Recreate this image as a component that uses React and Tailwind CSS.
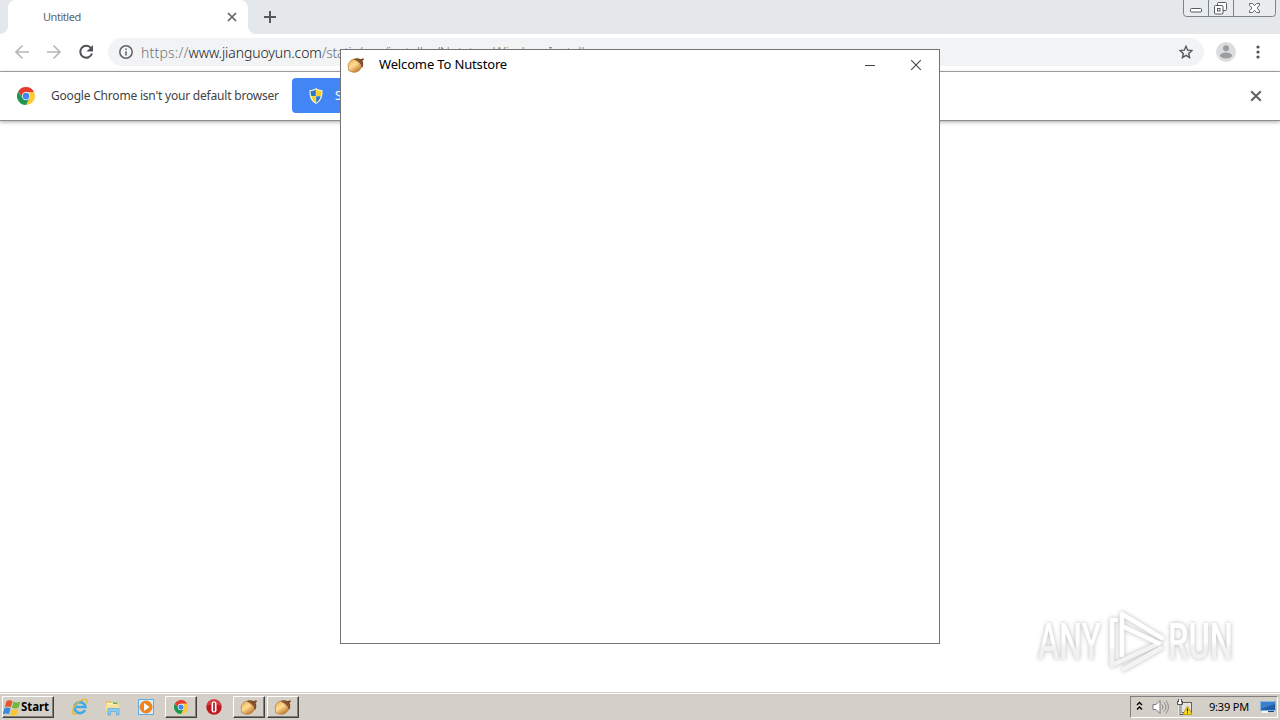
import { useId } from 'react';

const ui = "font-['Noto_Sans','Open_Sans',sans-serif]";

function ChromeLogo({ size }) {
  return (
    <svg width={size} height={size} viewBox="0 0 48 48" className="shrink-0">
      <path fill="#e33b2e" d="M24 13H45.3A24 24 0 0 0 3.2 12L14.5 29.5Z" />
      <path fill="#fcc934" d="M33.5 29.5 24 48A24 24 0 0 0 45.3 13H24Z" />
      <path fill="#1a9850" d="M14.5 29.5 3.2 12A24 24 0 0 0 24 48L33.5 29.5Z" />
      <circle cx="24" cy="24" r="11" fill="#fff" />
      <circle cx="24" cy="24" r="9" fill="#4285f4" />
    </svg>
  );
}

function Acorn({ size }) {
  const id = useId();
  return (
    <svg width={size} height={size} viewBox="0 0 18 18" className="shrink-0">
      <defs>
        <linearGradient id={id} x1="0.1" y1="0" x2="0.8" y2="1">
          <stop offset="0" stopColor="#e9a850" />
          <stop offset="0.45" stopColor="#ffdc91" />
          <stop offset="1" stopColor="#b96b20" />
        </linearGradient>
      </defs>
      <path fill={`url(#${id})`} stroke="#a8682c" strokeWidth="0.6" d="M7.500 3C4 3.500 1 6.500 1.200 10c.2 2 .6 3 .4 4.600 1.500.3 3 1.700 5.400 1.700 4 0 7-2.600 7.600-6Z" />
      <path fill="#7a431c" d="M6.500 3.300C8.500 2 11.500 1.900 13.500 3.200l2.700-.9.900 1.200-1.700 1.300c1.300 2 1.200 5-.5 7.400C14.500 8.500 11.500 4.800 6.500 3.300Z" />
      <path stroke="#b3783f" strokeWidth="0.6" fill="none" d="M9.500 3.200c3 .7 5 3 5.700 5.800" />
    </svg>
  );
}

function Shield() {
  return (
    <svg width="14" height="16" viewBox="0 0 14 16" className="shrink-0">
      <path fill="#f4f1cf" d="M7 0C5 1.500 3 2 .5 2 .2 8 1.500 13 7 16c5.500-3 6.800-8 6.500-14C11 2 9 1.500 7 0Z" />
      <path fill="#2c78cf" d="M6.800 1.500C5 2.700 3.500 3 1.600 3.100c0 1.700.1 3.400.6 4.900h4.600Z" />
      <path fill="#f9cf25" d="M7.200 1.500C9 2.700 10.500 3 12.400 3.100c0 1.700-.1 3.400-.6 4.900H7.200Z" />
      <path fill="#f9cf25" d="M2.300 8.200h4.500v6.500c-2.200-1.400-3.800-3.600-4.500-6.500Z" />
      <path fill="#2c78cf" d="M11.700 8.200H7.200v6.500c2.200-1.400 3.800-3.600 4.500-6.500Z" />
    </svg>
  );
}

function Cross({ size, width = 2, color = '#5f6368' }) {
  return (
    <svg width={size} height={size} viewBox="0 0 10 10" fill="none" stroke={color} strokeWidth={width} className="shrink-0">
      <path d="m1 1 8 8M9 1 1 9" />
    </svg>
  );
}

function CaptionButtons() {
  return (
    <svg width="93" height="17" viewBox="0 0 93 17" fill="none" stroke="#7d838a" className="shrink-0">
      <path fill="#e9ecee" d="M.5 0v13.500q0 3 3 3h86q3 0 3-3V0" />
      <path d="M25.500 0v16.500M50.500 0v16.500" />
      <g stroke="#555a61">
        <rect x="7.500" y="8.500" width="11" height="3.500" rx="1" fill="#fff" />
        <rect x="34.500" y="2.500" width="9" height="8" rx="1" fill="#fff" />
        <rect x="31.500" y="5.500" width="8.500" height="8.500" rx="1" fill="#fff" />
        <rect x="34.500" y="8.500" width="2.500" height="2.500" />
        <path fill="#fff" strokeWidth="0.9" d="M66.500 3.500h3l2 2.200 2-2.200h3v1.800L74 8l2.500 2.800v1.700h-3l-2-2.200-2 2.200h-3v-1.700L69 8l-2.500-2.700Z" />
      </g>
    </svg>
  );
}

function TabStrip() {
  return (
    <div className="flex h-[34px] bg-[#e4e8eb]">
      <div className="w-2 bg-white">
        <div className="h-full rounded-br-lg bg-[#e4e8eb]" />
      </div>
      <div className="flex w-60 items-center rounded-t-lg bg-white pr-[11px] pl-[35px]">
        <span className="flex-1 text-[11px] tracking-[-0.450px] text-[#5f6368]">Untitled</span>
        <Cross size={10} width={1.7} />
      </div>
      <div className="w-2 bg-white">
        <div className="h-full rounded-bl-lg bg-[#e4e8eb]" />
      </div>
      <svg width="28" height="34" fill="none" stroke="#55595e" strokeWidth="2">
        <path d="M14 11v12M8 17h12" />
      </svg>
      <div className="flex-1" />
      <CaptionButtons />
      <div className="w-1" />
    </div>
  );
}

function Toolbar() {
  return (
    <div className="flex h-[38px] items-center border-b border-[#a9abad] bg-white pb-px pl-[15px]">
      <svg width="80" height="16" viewBox="0 0 80 16" fill="none" strokeWidth="1.7">
        <path stroke="#b6b8bb" d="M14 8H1M7.500 1.500 1 8l6.500 6.500M32 8h13M38.500 1.500 45 8l-6.500 6.500" />
        <path stroke="#505459" strokeWidth="2" d="M76 4A6 6 0 1 0 77 9.500" />
        <path fill="#505459" d="M78 1v6.500h-6.500Z" />
      </svg>
      <div className="ml-[13px] flex h-7 w-[1096px] items-center rounded-full bg-[#f1f3f4] pr-[11px] pl-[11px]">
        <svg width="14" height="14" viewBox="0 0 14 14" className="shrink-0" fill="none" stroke="#5f6368">
          <circle cx="7" cy="7" r="6.200" strokeWidth="1.500" />
          <path strokeWidth="1.500" d="M7 6.200v4.300M7 3.500V5" />
        </svg>
        <div className="ml-2 flex-1 text-[14px] font-light whitespace-nowrap text-[#72767b]">
          <span className="tracking-[0.200px]">https://</span>
          <span className="tracking-[-0.100px] text-[#202124]">www.jianguoyun.com</span>
          <span className="tracking-[-0.320px]">/static/exe/installer/NutstoreWindowsInstaller</span>
        </div>
        <svg width="14" height="14" viewBox="0 0 14 14" fill="none" stroke="#55595e" strokeWidth="1.400">
          <path d="m7 1.300 1.700 3.900 4.200.4-3.200 2.800.9 4.200L7 10.400l-3.600 2.200.9-4.200L1.100 5.600l4.200-.4Z" />
        </svg>
      </div>
      <svg width="20" height="20" viewBox="0 0 20 20" className="ml-3">
        <circle cx="10" cy="10" r="10" fill="#dcdddf" />
        <circle cx="10" cy="6.200" r="3" fill="#9b9da0" />
        <ellipse cx="10" cy="13.500" rx="6" ry="3" fill="#9b9da0" />
      </svg>
      <svg width="4" height="16" viewBox="0 0 4 16" className="ml-5" fill="#505459">
        <circle cx="2" cy="3" r="1.600" />
        <circle cx="2" cy="8" r="1.600" />
        <circle cx="2" cy="13" r="1.600" />
      </svg>
    </div>
  );
}

function InfoBar() {
  return (
    <div className="z-10 flex h-[49px] items-center border-b border-[#8d8d8d] bg-white pb-px pl-[17px] shadow-[0_1px_4px_rgba(0,0,0,0.35)]">
      <ChromeLogo size={18} />
      <span className="ml-4 w-[241px] text-[12px] tracking-[-0.200px] whitespace-nowrap text-[#3f4246]">
        Google Chrome isn't your default browser
      </span>
      <button className="flex h-[35px] w-32 items-center gap-3 rounded bg-[#4285f4] pl-[17px] text-xs whitespace-nowrap text-white">
        <Shield />
        Set as default
      </button>
      <div className="flex-1" />
      <Cross size={12} width={1.700} />
      <div className="w-[18px]" />
    </div>
  );
}

function NutstoreWindow() {
  return (
    <div className="absolute top-[49px] left-[340px] z-20 h-[595px] w-[600px] border border-[#747474] bg-white">
      <div className="flex h-[30px] items-center pl-[6px]">
        <Acorn size={18} />
        <span className="ml-[14px] flex-1 text-[13px] tracking-[-0.150px] text-black">Welcome To Nutstore</span>
        <div className="h-px w-[10px] bg-[#444]" />
        <div className="w-[35px]" />
        <Cross size={12} width={0.900} color="#444" />
        <div className="w-[17px]" />
      </div>
    </div>
  );
}

function Watermark() {
  return (
    <svg
      width="220"
      height="74"
      viewBox="0 0 220 74"
      className="absolute top-[605px] left-[1033px] [filter:drop-shadow(0_0_2px_rgba(0,0,0,0.28))]"
    >
      <defs>
        <linearGradient id="letters" x1="0" y1="0" x2="0" y2="1">
          <stop offset="0.5" stopColor="#fff" />
          <stop offset="0.6" stopColor="#f1f1f1" />
        </linearGradient>
      </defs>
      <g className="font-['Roboto',sans-serif]" fontSize="50" fontWeight="500" fill="url(#letters)">
        <text x="5" y="54" textLength="63" lengthAdjust="spacingAndGlyphs">ANY</text>
        <text x="135" y="54" textLength="65" lengthAdjust="spacingAndGlyphs">RUN</text>
      </g>
      <g fill="none" strokeWidth="4.500" strokeLinejoin="round" strokeLinecap="round">
        <path stroke="#f3f3f3" d="M79 17V60L127 38M91 64l37-21" />
        <path stroke="#fff" d="M79 42V15h4M89 50V9l40 24M89 21l36 17" />
      </g>
    </svg>
  );
}

function StartFlag() {
  return (
    <svg width="18" height="17" viewBox="1 0.500 15 14" className="shrink-0">
      <path fill="#e6552b" d="M4 2c2-1 3.500-.5 5 .3L7.600 7.300C6 6.500 4.500 6.500 2.500 7.200Z" />
      <path fill="#70b83d" d="M9.800 2.700c2 .8 3.700.8 5.700-.2L14 7.600c-2 1-3.700.9-5.600.1Z" />
      <path fill="#388bdc" d="M2.200 8.100c2-.8 3.500-.6 5.100.2L5.900 13.200c-1.700-.8-3.200-.9-5.200 0Z" />
      <path fill="#fac632" d="M8.200 8.700c1.900.8 3.700.8 5.600-.2l-1.500 5.100c-2 1-3.600 1-5.500.1Z" />
    </svg>
  );
}

function InternetExplorer() {
  return (
    <svg width="18" height="18" viewBox="0 0 18 18" fill="none" className="shrink-0">
      <path stroke="#3aaae8" strokeWidth="2.600" d="M14 12A5.500 5.500 0 1 1 14.500 9H5" />
      <path stroke="#e6b83b" strokeWidth="1.400" d="M15.500 5.500c2.200-5-2.700-5.500-8-1.500C2.500 8 .5 13.500 2 15.500c.8 1 2.200.8 3.800 0" />
    </svg>
  );
}

function Explorer() {
  return (
    <svg width="17" height="17" viewBox="0 0 17 17" className="shrink-0">
      <path fill="#e8c765" d="M1.500 2h5l1 1.500h7V13h-13Z" />
      <path fill="#fff6c5" d="M3 4h10v3H3Z" />
      <path fill="#6aaf57" d="M9 3.500h4V5H9Z" />
      <path fill="#f6e19a" d="M1.500 5.500h13.500v7H1.500Z" />
      <path fill="#8cccf0" stroke="#5ba5d5" strokeWidth="0.700" d="M4 9.500h11V16h-2.500v-3.500h-6V16H4Z" />
    </svg>
  );
}

function MediaPlayer() {
  return (
    <svg width="16" height="16" viewBox="0 0 16 16" className="shrink-0">
      <rect x="0.500" y="0.500" width="15" height="15" fill="#d9efff" stroke="#65a9e3" />
      <circle cx="8" cy="8" r="6" fill="#f18419" stroke="#e8801f" />
      <path fill="#fff" d="m6 4 5.500 4L6 12Z" />
    </svg>
  );
}

function Opera() {
  return (
    <svg width="16" height="16" viewBox="0 0 16 16" className="shrink-0">
      <circle cx="8" cy="8" r="7.700" fill="#bf1820" />
      <path fill="#e96363" opacity="0.500" d="M1 7a7 7 0 0 1 14 0q-7-4-14 0Z" />
      <rect x="5.500" y="2.500" width="5" height="11" rx="2.200" fill="#fff" />
      <rect x="7.200" y="3.500" width="1.600" height="9" rx="0.800" fill="#9d1118" />
    </svg>
  );
}

function TaskButton({ children }) {
  return (
    <div className="flex h-[22px] w-8 items-center justify-center border border-t-white border-r-[#404040] border-b-[#404040] border-l-white shadow-[inset_-1px_-1px_0_#848078]">
      {children}
    </div>
  );
}

function Tray() {
  return (
    <div className="flex h-[22px] w-[148px] items-center border border-t-[#808080] border-r-white border-b-white border-l-[#808080] pl-[5px]">
      <svg width="7" height="10" viewBox="0 0 7 10" fill="none" stroke="#000" strokeWidth="1.400" className="mb-[3px]">
        <path d="m1 4 2.500-2.500L6 4M1 8.500 3.500 6 6 8.500" />
      </svg>
      <svg width="18" height="16" viewBox="0 0 18 16" className="ml-[9px]" fill="none">
        <path fill="#fff" stroke="#77787b" d="M1 5.500h3L8 1.500v13l-4-4H1Z" />
        <path stroke="#8a8b8d" d="M10 5.500q2 2.500 0 5M12 3.500q4 4.500 0 9M14 1.500q5 6.500 0 13" />
      </svg>
      <svg width="18" height="17" viewBox="0 0 18 17" className="ml-[6px]" fill="none">
        <rect x="5.500" y="3.500" width="10" height="10" fill="#e4e4e0" stroke="#626262" />
        <path stroke="#fff" strokeWidth="3" d="M4 1v14" />
        <path stroke="#555" d="M1.500 2v3.500h5V2M4 6v9.500h5M2.500 0v3M5.500 0v3" />
        <path fill="#ffdf19" stroke="#bd9100" strokeWidth="0.800" d="m11.500 7 4.500 8.500H7Z" />
        <path stroke="#222" strokeWidth="1.200" d="M11.500 9.500v3M11.500 13.500v1" />
      </svg>
      <span className="ml-[15px] w-[51px] text-[11px] tracking-[-0.200px] whitespace-nowrap text-black">9:39 PM</span>
      <svg width="17" height="14" viewBox="0 0 17 14">
        <path fill="#205da9" stroke="#88b6dc" d="M.5 1.500h15v9H.5Z" />
        <path fill="#3980c9" d="M1 2h14v2L1 9Z" />
        <path fill="#eef6fc" d="M2 11h6v2H2Z" />
        <path fill="#16477f" d="M8 11h6v1H8Z" />
      </svg>
    </div>
  );
}

function Taskbar() {
  return (
    <div className="h-[28px] border-t border-[#d4d0c8] bg-[#d4d0c8]">
      <div className="flex h-[27px] items-center border-t border-white pr-[2px] pl-[2px]">
        <div className="flex h-[22px] w-[52px] items-center border border-t-white border-r-[#404040] border-b-[#404040] border-l-white shadow-[inset_-1px_-1px_0_#848078]">
          <StartFlag />
          <span className="text-[11.500px] font-bold tracking-[-0.100px] text-black">Start</span>
        </div>
        <div className="ml-[17px] flex w-[152px] items-center">
          <InternetExplorer />
          <div className="w-[15px]" />
          <Explorer />
          <div className="w-[17px]" />
          <MediaPlayer />
          <div className="w-[11px]" />
          <TaskButton>
            <ChromeLogo size={14} />
          </TaskButton>
          <div className="w-[9px]" />
          <Opera />
        </div>
        <div className="ml-[10px] flex gap-[2px]">
          <TaskButton>
            <Acorn size={18} />
          </TaskButton>
          <TaskButton>
            <Acorn size={18} />
          </TaskButton>
        </div>
        <div className="flex-1" />
        <Tray />
      </div>
    </div>
  );
}

export default function App() {
  return (
    <div className={`relative flex h-[720px] w-[1280px] flex-col overflow-hidden bg-white ${ui}`}>
      <TabStrip />
      <Toolbar />
      <InfoBar />
      <div className="flex-1 bg-white" />
      <Taskbar />
      <NutstoreWindow />
      <Watermark />
    </div>
  );
}
